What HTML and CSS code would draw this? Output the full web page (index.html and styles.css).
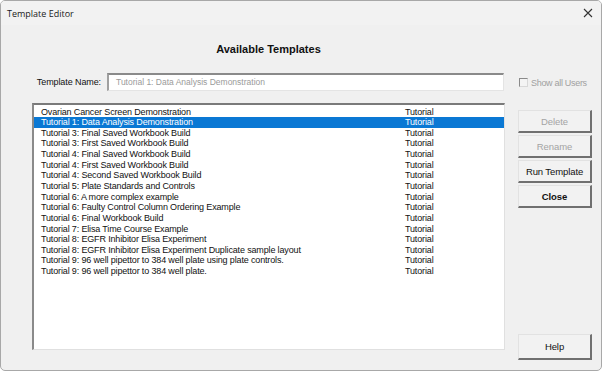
FILE: index.html
```html
<!DOCTYPE html>
<html>
<head>
<meta charset="utf-8">
<link rel="stylesheet" href="styles.css">
</head>
<body>
<div class="window">
  <div class="titlebar">
    <span class="title">Template Editor</span>
    <svg class="close-x" width="10" height="10" viewBox="0 0 10 10"><path d="M1 1 L9 9 M9 1 L1 9" stroke="#333" stroke-width="1.1" fill="none"/></svg>
  </div>
  <div class="content">
    <div class="heading">Available Templates</div>
    <div class="name-row">
      <label class="name-label">Template Name:</label>
      <div class="name-input">Tutorial 1: Data Analysis Demonstration</div>
      <div class="check">
        <span class="box"></span>
        <span class="check-text">Show all Users</span>
      </div>
    </div>
    <div class="main">
      <div class="listbox">
        <div class="row"><span>Ovarian Cancer Screen Demonstration</span><span>Tutorial</span></div>
        <div class="row selected"><span>Tutorial 1: Data Analysis Demonstration</span><span>Tutorial</span></div>
        <div class="row"><span>Tutorial 3: Final Saved Workbook Build</span><span>Tutorial</span></div>
        <div class="row"><span>Tutorial 3: First Saved Workbook Build</span><span>Tutorial</span></div>
        <div class="row"><span>Tutorial 4: Final Saved Workbook Build</span><span>Tutorial</span></div>
        <div class="row"><span>Tutorial 4: First Saved Workbook Build</span><span>Tutorial</span></div>
        <div class="row"><span>Tutorial 4: Second Saved Workbook Build</span><span>Tutorial</span></div>
        <div class="row"><span>Tutorial 5: Plate Standards and Controls</span><span>Tutorial</span></div>
        <div class="row"><span>Tutorial 6: A more complex example</span><span>Tutorial</span></div>
        <div class="row"><span>Tutorial 6: Faulty Control Column Ordering Example</span><span>Tutorial</span></div>
        <div class="row"><span>Tutorial 6: Final Workbook Build</span><span>Tutorial</span></div>
        <div class="row"><span>Tutorial 7: Elisa Time Course Example</span><span>Tutorial</span></div>
        <div class="row"><span>Tutorial 8: EGFR Inhibitor Elisa Experiment</span><span>Tutorial</span></div>
        <div class="row"><span>Tutorial 8: EGFR Inhibitor Elisa Experiment Duplicate sample layout</span><span>Tutorial</span></div>
        <div class="row"><span>Tutorial 9: 96 well pipettor to 384 well plate using plate controls.</span><span>Tutorial</span></div>
        <div class="row"><span>Tutorial 9: 96 well pipettor to 384 well plate.</span><span>Tutorial</span></div>
      </div>
      <div class="buttons">
        <div class="btn disabled">Delete</div>
        <div class="btn disabled">Rename</div>
        <div class="btn">Run Template</div>
        <div class="btn bold">Close</div>
        <div class="btn help">Help</div>
      </div>
    </div>
  </div>
</div>
</body>
</html>
```
FILE: styles.css
```css
html, body {
  margin: 0;
  padding: 0;
  background: #ffffff;
}
body {
  font-family: "Liberation Sans", Arial, sans-serif;
  color: #111;
}
.window {
  width: 602px;
  height: 371px;
  box-sizing: border-box;
  border: 1px solid #a8a8a8;
  border-radius: 5px;
  background: #f0f0f0;
  overflow: hidden;
}
.titlebar {
  height: 24px;
  display: flex;
  align-items: center;
  justify-content: space-between;
  padding: 0 8px 0 6px;
  background: #f2f2f2;
}
.title {
  font-family: "Open Sans", "Noto Sans", sans-serif;
  font-size: 9px;
  color: #1a1a1a;
}
.close-x {
  display: block;
}
.content {
  padding-left: 31px;
}
.heading {
  margin-top: 17px;
  width: 473px;
  height: 14px;
  line-height: 14px;
  text-align: center;
  font-weight: bold;
  font-size: 11px;
  color: #111;
}
.name-row {
  margin-top: 17px;
  height: 18px;
  display: flex;
  align-items: center;
}
.name-label {
  width: 69px;
  text-align: right;
  font-size: 9px;
  letter-spacing: -0.1px;
  margin-right: 6px;
}
.name-input {
  width: 397px;
  height: 18px;
  box-sizing: border-box;
  background: #fff;
  border-top: 2px solid #8a8a8a;
  border-left: 2px solid #a0a0a0;
  border-right: 1px solid #e4e4e4;
  border-bottom: 1px solid #e4e4e4;
  color: #9a9a9a;
  font-size: 8.5px;
  line-height: 15px;
  padding-left: 7px;
}
.check {
  margin-left: 15px;
  display: flex;
  align-items: center;
  padding-top: 1px;
}
.box {
  width: 9px;
  height: 9px;
  box-sizing: border-box;
  border-top: 1px solid #8a8a8a;
  border-left: 1px solid #8a8a8a;
  border-right: 1px solid #d8d8d8;
  border-bottom: 1px solid #d8d8d8;
  background: #f4f4f4;
  margin-right: 3px;
}
.check-text {
  font-size: 9px;
  letter-spacing: -0.3px;
  color: #a0a0a0;
}
.main {
  margin-top: 12px;
  display: flex;
  align-items: flex-start;
}
.listbox {
  width: 473px;
  height: 247px;
  box-sizing: border-box;
  background: #fff;
  border-top: 2px solid #7a7a7a;
  border-left: 2px solid #8a8a8a;
  border-right: 1px solid #e0e0e0;
  border-bottom: 1px solid #e0e0e0;
  padding-top: 1.5px;
  font-size: 9px;
  letter-spacing: -0.15px;
}
.row {
  display: grid;
  grid-template-columns: 364px 1fr;
  height: 10.65px;
  line-height: 10.65px;
  padding-left: 7px;
  white-space: nowrap;
  color: #111;
}
.row.selected {
  background: #0a78d4;
  color: #fff;
}
.buttons {
  margin-left: 13px;
  width: 74px;
  height: 257px;
  padding-top: 7px;
  box-sizing: border-box;
  display: flex;
  flex-direction: column;
  gap: 2px;
}
.btn {
  height: 23px;
  box-sizing: border-box;
  background: #f2f2f2;
  border-top: 1px solid #e2e2e2;
  border-left: 1px solid #e2e2e2;
  border-right: 2px solid #707070;
  border-bottom: 2px solid #707070;
  display: flex;
  align-items: center;
  justify-content: center;
  font-size: 9.5px;
  letter-spacing: -0.1px;
  color: #111;
}
.btn.disabled {
  color: #a4a4a4;
}
.btn.bold {
  font-weight: bold;
}
.btn.help {
  margin-top: auto;
  height: 26px;
}
```
